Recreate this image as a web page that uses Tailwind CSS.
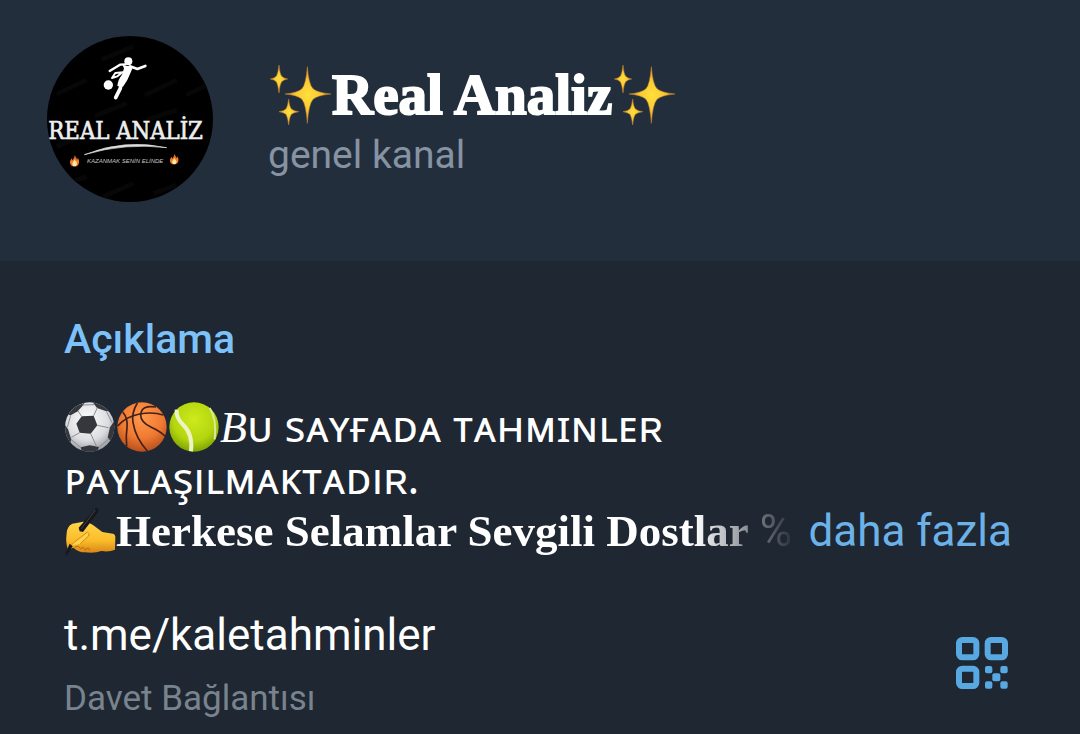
<!DOCTYPE html>
<html lang="tr">
<head>
    <meta charset="UTF-8">
    <meta name="viewport" content="width=device-width, initial-scale=1.0">
    <title>Real Analiz</title>
    <script src="https://cdn.jsdelivr.net/npm/@tailwindcss/browser@4"></script>
</head>
<body class="bg-[#1e2732] min-h-screen font-[Roboto,sans-serif] text-white">

<!-- Gradients and shapes shared by the icons -->
<svg class="absolute w-0 h-0" aria-hidden="true">
    <defs>
        <radialGradient id="gold"><stop offset="0" stop-color="#ffe03a"/><stop offset=".5" stop-color="#fbc935"/><stop offset="1" stop-color="#e08c28"/></radialGradient>
        <radialGradient id="white" cx=".45" cy=".35" r=".65"><stop offset="0" stop-color="#ffffff"/><stop offset=".65" stop-color="#dcdde0"/><stop offset="1" stop-color="#9a9da3"/></radialGradient>
        <radialGradient id="orange" cx=".5" cy=".3" r=".7"><stop offset="0" stop-color="#ff9a4d"/><stop offset=".6" stop-color="#f07a32"/><stop offset="1" stop-color="#b8501c"/></radialGradient>
        <radialGradient id="lime" cx=".5" cy=".35" r=".65"><stop offset="0" stop-color="#cdea1c"/><stop offset=".65" stop-color="#b4d60f"/><stop offset="1" stop-color="#7fa305"/></radialGradient>
        <linearGradient id="skin" x1="0" y1="0" x2="0" y2="1"><stop offset="0" stop-color="#ffd54a"/><stop offset=".6" stop-color="#fbbd2a"/><stop offset="1" stop-color="#d98618"/></linearGradient>
        <linearGradient id="fire" x1="0" y1="0" x2="0" y2="1"><stop offset="0" stop-color="#c8501c"/><stop offset=".6" stop-color="#f5832a"/><stop offset="1" stop-color="#e8691c"/></linearGradient>
        <symbol id="sparkles" viewBox="39 42 192 192">
            <g fill="url(#gold)" stroke="#c98a2c" stroke-width="1.5">
                <path d="M157 53Q161 106 174 119Q187 131 228 135Q187 139 174 151Q161 166 157 223Q153 166 141 151Q129 139 90 135Q129 131 141 119Q153 106 157 53Z"/>
                <path d="M72 48Q74 74 80 82Q86 88 98 90Q86 92 80 98Q74 107 72 132Q69 107 64 98Q58 92 46 90Q58 88 64 82Q69 74 72 48Z"/>
                <path d="M101 150Q103 173 109 180Q116 186 131 188Q116 190 109 196Q103 204 101 228Q98 204 93 196Q86 190 72 188Q86 186 93 180Q98 173 101 150Z"/>
            </g>
        </symbol>
        <symbol id="flame" viewBox="0 0 30 36">
            <path d="M15 0C17 7 22 9 22 15C24 13 24 11 24 9C28 14 29 19 28 24C27 32 21 36 15 36C8 36 2 32 1 25C0 19 4 16 5 11C7 13 8 15 8 17C12 12 15 7 15 0Z" fill="url(#fire)"/>
            <path d="M15 14C16 20 23 22 22 28C21 33 18 35 15 35C11 35 8 32 8 28C8 24 13 20 15 14Z" fill="#ffe9a0"/>
        </symbol>
    </defs>
</svg>

<!-- Header -->
<header class="bg-[#232e3c] pt-9 pb-[59px] px-[47px] flex items-center gap-[55px]">
    <svg class="w-[166px] h-[166px] shrink-0 rounded-full bg-black" viewBox="51 48 498 498" role="img" aria-label="Real Analiz logosu">
        <g fill="none" stroke="#070707" stroke-width="14">
            <path d="M80 222L170 180M215 118L310 80M345 226L440 180M470 225L540 190M195 288L290 250M350 300L440 270M80 380L150 350M220 530L310 490M370 520L440 495M110 490L170 470"/>
        </g>
        <!-- Player -->
        <circle cx="295" cy="124" r="12" fill="#fff"/>
        <circle cx="235" cy="195" r="14" fill="#fff"/>
        <g fill="none" stroke="#fff" stroke-linecap="round" stroke-linejoin="round">
            <path d="M285 133L270 134L239 153" stroke-width="7"/>
            <path d="M300 139L322 147L346 138" stroke-width="8"/>
            <path d="M279 157L256 159L246 174L262 169L276 158" stroke-width="6"/>
            <path d="M274 182L271 205L257 233" stroke-width="11"/>
        </g>
        <path d="M277 134Q292 139 310 139L300 162Q294 180 279 200L262 198Q264 178 276 164L282 145Z" fill="#fff"/>
        <text x="55" y="356" font-size="71" fill="#eee" stroke="#eee" stroke-width="2" font-family="DejaVu Serif Condensed, DejaVu Serif, serif">REAL ANALİZ</text>
        <path d="M163 404Q285 355 410 383Q285 368 163 404Z" fill="#ddd" stroke="#ddd" stroke-width="2"/>
        <text x="171" y="428" font-size="18" font-style="italic" fill="#c4c4c4" font-family="Liberation Sans, sans-serif">KAZANMAK SENİN ELİNDE</text>
        <use href="#flame" x="119" y="404" width="30" height="36"/>
        <use href="#flame" x="419" y="400" width="28" height="34"/>
    </svg>
    <div>
        <h1 class="flex items-center h-[72px] font-['Liberation_Serif',serif] font-bold text-[57px] leading-[68px] whitespace-nowrap">
            <svg class="w-16 h-16" aria-hidden="true"><use href="#sparkles"/></svg>
            <span class="[-webkit-text-stroke:2px_white]">Real Analiz</span>
            <svg class="w-16 h-16" aria-hidden="true"><use href="#sparkles"/></svg>
        </h1>
        <p class="text-[39px] leading-[48px] text-[#8593a3]">genel kanal</p>
    </div>
</header>

<main class="pt-[54px] px-16">
    <!-- Description -->
    <section>
        <h2 class="text-[41px] leading-[48px] font-medium text-[#7dc1fa]">Açıklama</h2>
        <div class="mt-[38px] text-[44px] leading-[52px] whitespace-nowrap">
            <p class="font-['Noto_Sans',sans-serif] leading-[48px]">
                <span class="flex h-[52px]">
                    <svg class="w-[52px] h-[52px]" viewBox="42 33 156 156" aria-hidden="true">
                        <clipPath id="ball"><circle cx="119" cy="111" r="74"/></clipPath>
                        <circle cx="119" cy="111" r="74" fill="url(#white)"/>
                        <g clip-path="url(#ball)">
                            <g fill="#35373c">
                                <path d="M95 79L131 77L142 106L122 131L89 128L79 101Z"/>
                                <path d="M72 50L104 38L100 45L83 64L62 76L54 74Z"/>
                                <path d="M128 37L158 42L180 63L169 64L141 54Z"/>
                                <path d="M45 105L54 118L64 149L60 160L44 135Z"/>
                                <path d="M195 90L199 125L182 152L173 143L180 112Z"/>
                                <path d="M92 172L119 166L147 171L140 190L98 190Z"/>
                            </g>
                            <path d="M95 79L84 63M131 77L142 53M142 106L175 113M122 131L140 170M89 128L64 142M62 76L52 112M97 45L132 44M169 64L186 98M64 149L93 173M147 171L178 145" fill="none" stroke="#8b8e94" stroke-width="3"/>
                        </g>
                    </svg>
                    <svg class="w-[52px] h-[52px]" viewBox="199 33 156 156" aria-hidden="true">
                        <circle cx="277" cy="111" r="74" fill="url(#orange)"/>
                        <g fill="none" stroke="#45201a" stroke-width="5">
                            <path d="M204 108Q228 80 270 72Q310 65 341 75"/>
                            <path d="M263 39Q245 69 250 98Q258 145 293 183"/>
                            <path d="M319 51Q275 44 273 75Q273 97 305 112Q335 126 346 139"/>
                            <path d="M219 66Q235 84 232 112Q228 138 231 168"/>
                        </g>
                    </svg>
                    <svg class="w-[52px] h-[52px]" viewBox="355 33 156 156" aria-hidden="true">
                        <circle cx="433" cy="111" r="74" fill="url(#lime)"/>
                        <path d="M381 59Q378 82 401 105Q430 133 424 184" fill="none" stroke="#eef3c4" stroke-width="12"/>
                        <path d="M480 54Q502 87 495 148" fill="none" stroke="#dbe99a" stroke-width="6"/>
                    </svg>
                    <span><i class="font-['Liberation_Serif',serif]">B</i>ᴜ sᴀʏғᴀᴅᴀ ᴛᴀʜᴍɪɴʟᴇʀ</span>
                </span>
                <span class="block h-[52px]">ᴘᴀʏʟᴀşıʟᴍᴀᴋᴛᴀᴅıʀ.</span>
            </p>
            <div class="flex h-[52px] justify-between">
                <p class="flex flex-1 min-w-0 [mask-image:linear-gradient(to_right,#000_630px,transparent_734px)]">
                    <svg class="w-[52px] h-[52px] shrink-0" viewBox="42 42 156 156" aria-hidden="true">
                        <path d="M50 126Q51 106 67 98L100 92Q119 93 132 104L157 123L189 128Q197 130 196 142L195 176Q178 184 154 180Q134 188 104 184Q86 184 70 170L54 176Q46 156 50 126Z" fill="url(#skin)"/>
                        <path d="M62 165Q74 150 91 140L112 123Q122 127 115 136L91 158" fill="#ffd249" stroke="#d48a16" stroke-width="3"/>
                        <path d="M74 170Q84 161 91 172M91 174Q101 164 106 178M106 177Q117 165 119 178" fill="none" stroke="#b96a12" stroke-width="3"/>
                        <path d="M138 51Q148 51 145 62L99 123L89 121L86 110Z" fill="#17181b"/>
                        <path d="M59 158L68 166L52 190L46 194L47 186Z" fill="#17181b"/>
                        <path d="M136 57L94 113" stroke="#54575d" stroke-width="2"/>
                    </svg>
                    <span><b class="font-['Liberation_Serif',serif] text-[45px]">Herkese Selamlar Sevgili Dostlar</b> %</span>
                </p>
                <button type="button" class="shrink-0 pr-1 text-[#6cb2e8]">daha fazla</button>
            </div>
        </div>
    </section>

    <!-- Invite link -->
    <section class="mt-[52px] flex items-start justify-between">
        <div>
            <a href="https://t.me/kaletahminler" class="block text-[44px] leading-[52px]">t.me/kaletahminler</a>
            <p class="mt-[14px] text-[35px] leading-[48px] text-[#79838e]">Davet Bağlantısı</p>
        </div>
        <button type="button" aria-label="QR kodu" class="mt-7 mr-2">
            <svg class="w-[52px] h-[52px]" viewBox="75 54 156 156" fill="#58a9e2" aria-hidden="true">
                <g fill="none" stroke="#58a9e2" stroke-width="18">
                    <rect x="84" y="63" width="52" height="52" rx="10"/>
                    <rect x="170" y="63" width="52" height="52" rx="10"/>
                    <rect x="84" y="149" width="52" height="52" rx="10"/>
                </g>
                <rect x="162" y="141" width="22" height="22" rx="6"/>
                <rect x="208" y="141" width="22" height="22" rx="6"/>
                <rect x="184" y="163" width="24" height="24" rx="6"/>
                <rect x="162" y="187" width="22" height="22" rx="6"/>
                <rect x="208" y="187" width="22" height="22" rx="6"/>
            </svg>
        </button>
    </section>
</main>
</body>
</html>
